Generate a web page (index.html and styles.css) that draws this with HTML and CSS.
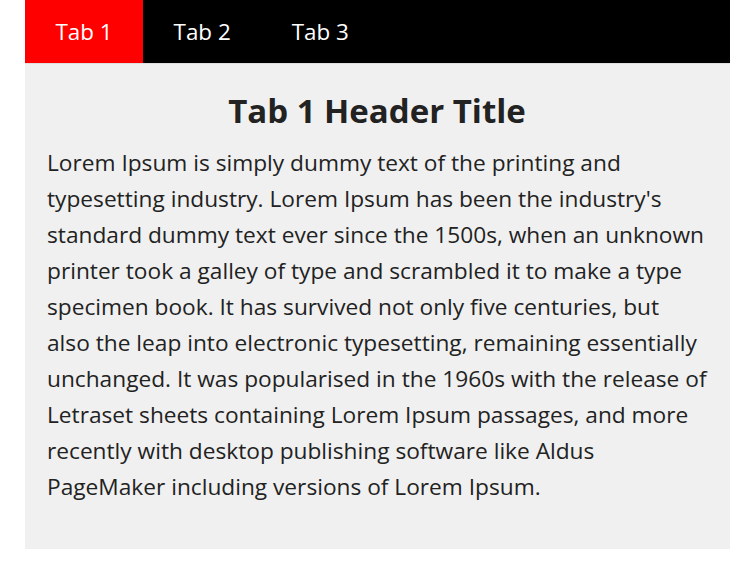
FILE: index.html
```html
<!DOCTYPE html>
<html lang="en">
<head>
<meta charset="utf-8">
<title>Tabs</title>
<link rel="stylesheet" href="styles.css">
</head>
<body>
<div class="tabs">
  <div class="tab-bar">
    <button class="tab active">Tab 1</button>
    <button class="tab">Tab 2</button>
    <button class="tab">Tab 3</button>
  </div>
  <div class="tab-content">
    <h1 class="title">Tab 1 Header Title</h1>
    <p class="text">Lorem Ipsum is simply dummy text of the printing and typesetting industry. Lorem Ipsum has been the industry's standard dummy text ever since the 1500s, when an unknown printer took a galley of type and scrambled it to make a type specimen book. It has survived not only five centuries, but also the leap into electronic typesetting, remaining essentially unchanged. It was popularised in the 1960s with the release of Letraset sheets containing Lorem Ipsum passages, and more recently with desktop publishing software like Aldus PageMaker including versions of Lorem Ipsum.</p>
  </div>
</div>
</body>
</html>
```
FILE: styles.css
```css
html, body {
  margin: 0;
  padding: 0;
  background: #ffffff;
}
body {
  padding: 0 15px 0 25px;
  font-family: "Open Sans", "Noto Sans", sans-serif;
}
.tabs {
  width: 705px;
}
.tab-bar {
  display: flex;
  height: 63px;
  background: #000000;
  border-bottom: 1px solid #dedede;
}
.tab {
  border: 0;
  margin: 0;
  padding: 0 30.5px;
  background: transparent;
  color: #ffffff;
  font-family: inherit;
  font-size: 22.4px;
  line-height: 63px;
  cursor: pointer;
}
.tab.active {
  background: #ff0000;
}
.tab-content {
  background: #f0f0f0;
  padding: 27px 23px 44px 22px;
  color: #222222;
}
.title {
  margin: 0 0 14px;
  text-align: center;
  font-size: 33px;
  font-weight: 700;
  line-height: 40px;
}
.text {
  margin: 0;
  font-size: 22.7px;
  line-height: 36px;
}
```
